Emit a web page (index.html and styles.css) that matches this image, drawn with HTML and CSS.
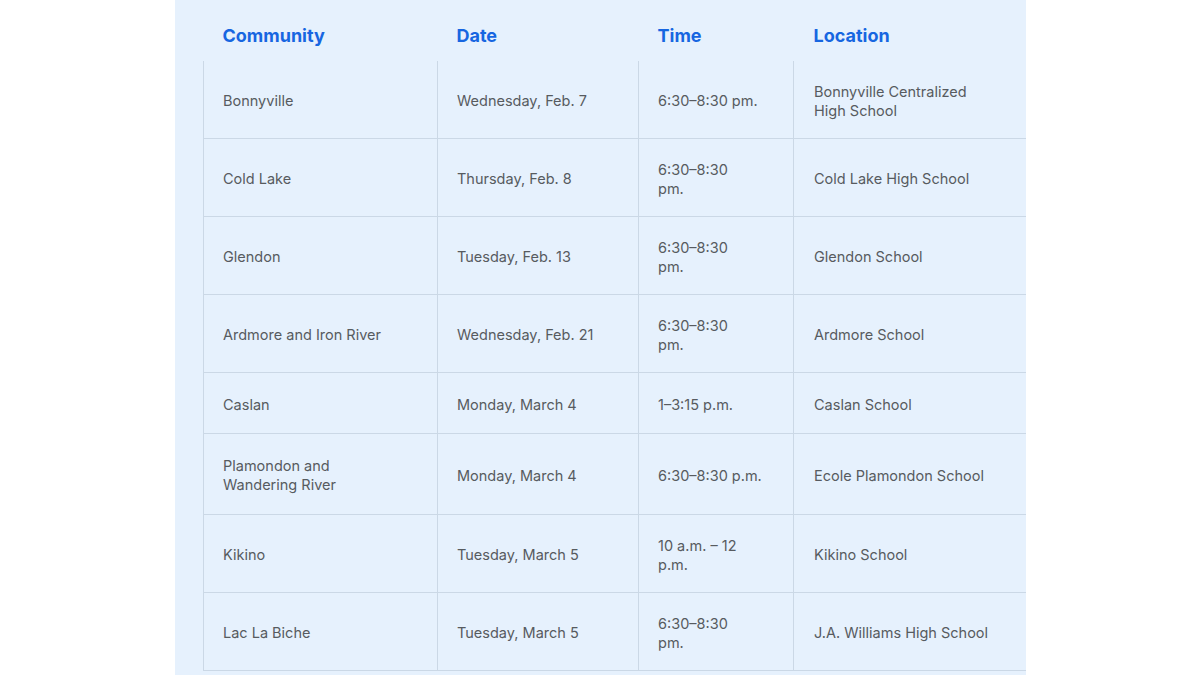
FILE: index.html
```html
<!DOCTYPE html>
<html lang="en">
<head>
<meta charset="utf-8">
<title>Community sessions</title>
<link rel="stylesheet" href="styles.css">
</head>
<body>
<div class="panel">
  <table class="sessions">
    <colgroup>
      <col class="c1"><col class="c2"><col class="c3"><col class="c4">
    </colgroup>
    <thead>
      <tr><th>Community</th><th>Date</th><th>Time</th><th>Location</th></tr>
    </thead>
    <tbody>
      <tr class="std"><td>Bonnyville</td><td>Wednesday, Feb. 7</td><td>6:30–8:30 pm.</td><td>Bonnyville Centralized<br>High School</td></tr>
      <tr class="std"><td>Cold Lake</td><td>Thursday, Feb. 8</td><td>6:30–8:30<br>pm.</td><td>Cold Lake High School</td></tr>
      <tr class="std"><td>Glendon</td><td>Tuesday, Feb. 13</td><td>6:30–8:30<br>pm.</td><td>Glendon School</td></tr>
      <tr class="std"><td>Ardmore and Iron River</td><td>Wednesday, Feb. 21</td><td>6:30–8:30<br>pm.</td><td>Ardmore School</td></tr>
      <tr class="short"><td>Caslan</td><td>Monday, March 4</td><td>1–3:15 p.m.</td><td>Caslan School</td></tr>
      <tr class="tall"><td>Plamondon and<br>Wandering River</td><td>Monday, March 4</td><td>6:30–8:30 p.m.</td><td>Ecole Plamondon School</td></tr>
      <tr class="std"><td>Kikino</td><td>Tuesday, March 5</td><td>10 a.m. – 12<br>p.m.</td><td>Kikino School</td></tr>
      <tr class="std"><td>Lac La Biche</td><td>Tuesday, March 5</td><td>6:30–8:30<br>pm.</td><td>J.A. Williams High School</td></tr>
    </tbody>
  </table>
</div>
</body>
</html>
```

FILE: styles.css
```css
html, body {
  margin: 0;
  padding: 0;
  background: #ffffff;
}

body {
  font-family: Inter, "Open Sans", sans-serif;
}

.panel {
  margin-left: 175px;
  width: 823px;
  height: 675px;
  padding-left: 28px;
  background: #e6f1fd;
  overflow: hidden;
}

.sessions {
  border-collapse: collapse;
  table-layout: fixed;
  width: 823px;
}

.c1 { width: 234px; }
.c2 { width: 201px; }
.c3 { width: 155px; }
.c4 { width: 233px; }

.sessions th {
  height: 61px;
  padding: 10px 19px 0 19px;
  box-sizing: border-box;
  text-align: left;
  font-size: 18px;
  font-weight: 700;
  color: #1766e1;
  border: none;
}

.sessions td {
  padding: 2px 19px 0 19px;
  border: 1px solid #cbd8e6;
  font-size: 14.5px;
  line-height: 19px;
  color: #575b60;
  vertical-align: middle;
  font-weight: 400;
}

.sessions th:nth-child(4),
.sessions td:nth-child(4) {
  padding-left: 20px;
}

.sessions tbody tr:first-child td {
  border-top: none;
}

.sessions td:nth-child(3) {
  white-space: nowrap;
}

.std td { height: 75px; }
.short td { height: 58px; }
.tall td { height: 78px; }
```
